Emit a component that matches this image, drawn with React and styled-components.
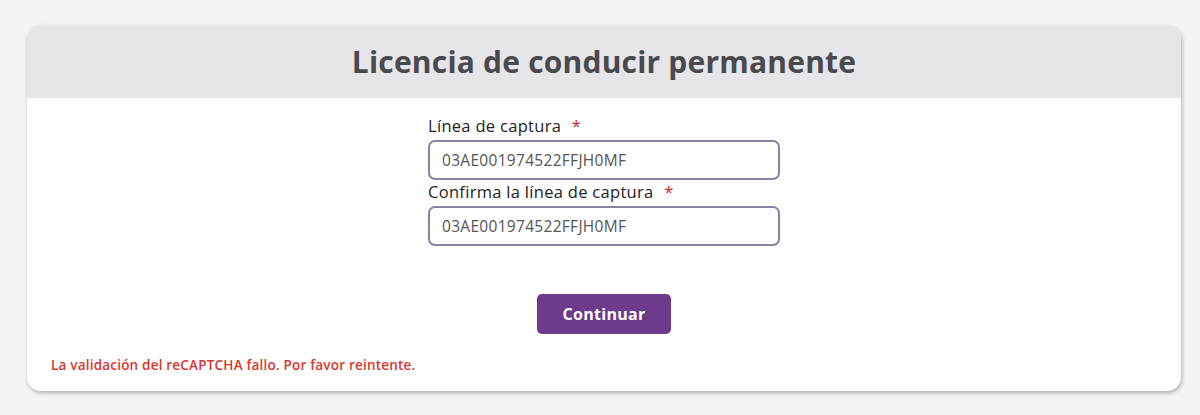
import React from 'react';
import styled, { createGlobalStyle } from 'styled-components';

const GlobalStyle = createGlobalStyle`
  body {
    margin: 0;
    background: #f4f4f4;
    font-family: 'Open Sans', 'Liberation Sans', sans-serif;
  }
`

export default function App() {
  return (
    <>
      <GlobalStyle />
      <Page>
        <Card>
          <Header>
            <Title>Licencia de conducir permanente</Title>
          </Header>
          <Body>
            <Form>
              <Label>Línea de captura <Req>*</Req></Label>
              <Input defaultValue="03AE001974522FFJH0MF" />
              <Label second>Confirma la línea de captura <Req>*</Req></Label>
              <Input defaultValue="03AE001974522FFJH0MF" />
            </Form>
            <Actions>
              <Button>Continuar</Button>
            </Actions>
            <Error>La validación del reCAPTCHA fallo. Por favor reintente.</Error>
          </Body>
        </Card>
      </Page>
    </>
  )
}

const Page = styled.div`
  padding: 25px 19px 24px 27px;
`
const Card = styled.div`
  background: #fff;
  border-radius: 14px;
  overflow: hidden;
  box-shadow: 1px 2px 4px rgba(0, 0, 0, 0.28);
`
const Header = styled.div`
  height: 73px;
  background: #e6e6ea;
  display: flex;
  align-items: center;
  justify-content: center;
`
const Title = styled.h1`
  margin: 0;
  font-size: 30px;
  font-weight: 700;
  color: #4a4a4e;
  letter-spacing: 0.2px;
`
const Body = styled.div`
  padding: 18px 24px 17px;
`
const Form = styled.div`
  width: 352px;
  margin: 0 auto;
  display: flex;
  flex-direction: column;
`
const Label = styled.label`
  font-size: 16.5px;
  letter-spacing: 0.3px;
  line-height: 20px;
  color: #222;
  margin: ${p => (p.second ? '2px 0 4px' : '0 0 4px')};
`
const Req = styled.span`
  color: #c62828;
  margin-left: 6px;
`
const Input = styled.input`
  box-sizing: border-box;
  height: 40px;
  width: 100%;
  border: 2px solid #8e80a2;
  border-radius: 7px;
  padding: 0 12px;
  font-family: inherit;
  font-size: 15.5px;
  letter-spacing: 0.3px;
  color: #555;
  outline: none;
`
const Actions = styled.div`
  display: flex;
  justify-content: center;
  margin-top: 48px;
`
const Button = styled.button`
  width: 134px;
  height: 40px;
  border: none;
  border-radius: 5px;
  background: #6d3a8c;
  color: #fff;
  font-family: inherit;
  font-size: 16px;
  letter-spacing: 0.3px;
  font-weight: 700;
`
const Error = styled.div`
  margin-top: 22px;
  font-size: 13.5px;
  letter-spacing: 0.2px;
  line-height: 18px;
  font-weight: 600;
  color: #d9372f;
`
